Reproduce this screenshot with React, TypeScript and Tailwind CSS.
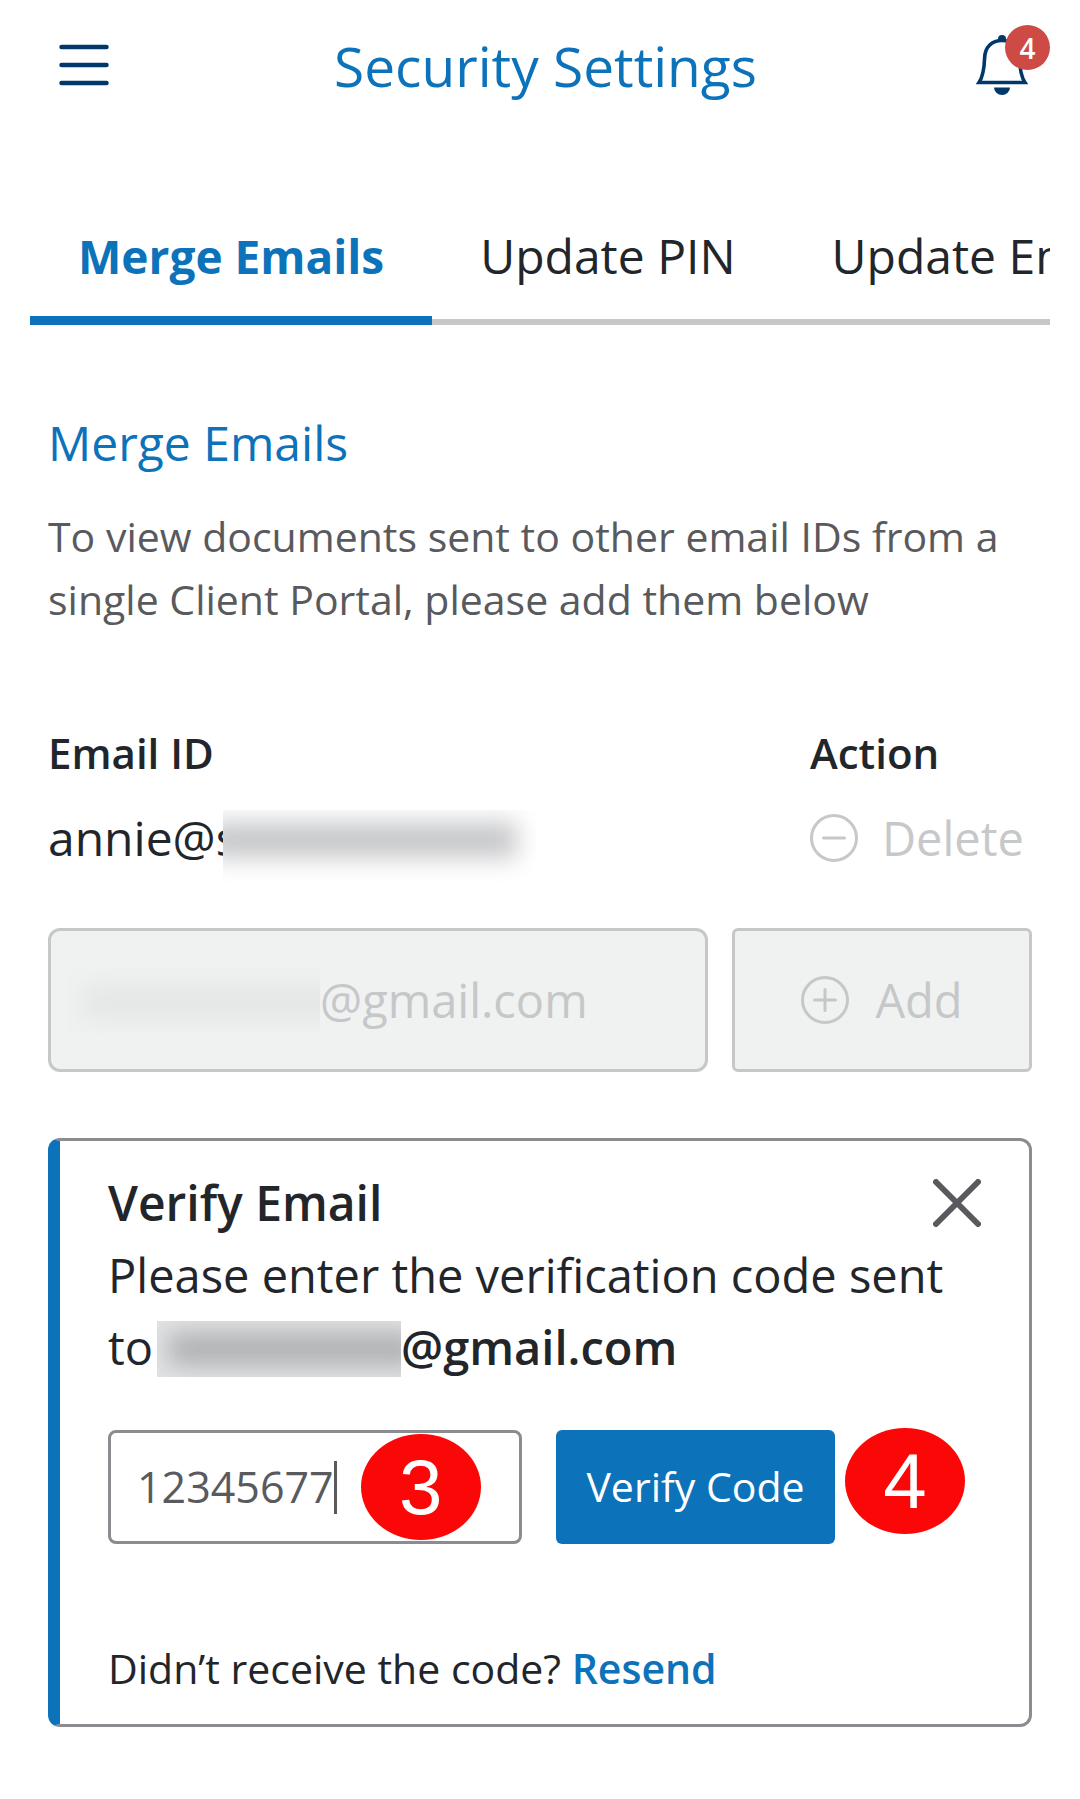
import React, { useState } from "react";
import clsx from "clsx";

const TABS = ["Merge Emails", "Update PIN", "Update Email"];

function MenuIcon() {
  return (
    <svg width="50" height="42" viewBox="0 0 50 42" fill="none" stroke="#00386b" strokeWidth="4.5" strokeLinecap="round">
      <path d="M2.5 3h45M2.5 21h45M2.5 39h45" />
    </svg>
  );
}

function BellIcon() {
  return (
    <svg width="52" height="60" viewBox="0 0 52 60" fill="none">
      <path
        d="M3 47.5C6.5 42.5 8.2 34 8.6 23C9 11.5 16 5.5 26 5.5C36 5.5 43 11.5 43.4 23C43.8 34 45.5 42.5 49 47.5Z"
        stroke="#00386b"
        strokeWidth="3.6"
      />
      <path d="M22 6.500V4a4 4 0 0 1 8 0v2.500z" fill="#00386b" />
      <path d="M18 52.500h16a8 7.500 0 0 1-16 0z" fill="#00386b" />
    </svg>
  );
}

function CircleIcon({ plus }: { plus?: boolean }) {
  return (
    <svg width="48" height="48" viewBox="0 0 48 48" fill="none" stroke="currentColor" strokeWidth="3" strokeLinecap="round">
      <circle cx="24" cy="24" r="22.5" />
      <path d="M13.500 24h21" />
      {plus && <path d="M24 13.500v21" />}
    </svg>
  );
}

function CloseIcon() {
  return (
    <svg width="48" height="48" viewBox="0 0 48 48" fill="none" stroke="#585a5e" strokeWidth="6" strokeLinecap="round">
      <path d="M3 3l42 42M45 3L3 45" />
    </svg>
  );
}

function StepMarker({ n }: { n: number }) {
  return (
    <span className="flex h-[106px] w-[120px] shrink-0 items-center justify-center rounded-[50%] bg-[#fc0707] font-['Liberation_Sans',sans-serif] text-[78px] leading-none text-white">
      {n}
    </span>
  );
}

function App() {
  const [tab, setTab] = useState(0);
  const [code, setCode] = useState("12345677");

  return (
    <div className="bg-white pb-18 font-['Open_Sans',sans-serif] text-[47px] text-[#22252a]">
      <header className="flex items-start justify-between pt-[25px] pr-[30px] pl-[59px]">
        <button aria-label="Menu" className="mt-[19px] w-14">
          <MenuIcon />
        </button>
        <h1 className="text-[55px] leading-[82px] font-medium text-[#0c72ba]">Security Settings</h1>
        <button aria-label="Notifications" className="relative flex h-[70px] w-[74px] items-end">
          <BellIcon />
          <span className="absolute top-0 right-0 flex size-[45px] items-center justify-center rounded-full bg-[#cd4a45] text-[28px] font-semibold text-white">
            4
          </span>
        </button>
      </header>

      <nav className="mx-[30px] mt-[93px] flex overflow-hidden whitespace-nowrap">
        {TABS.map((name, i) => (
          <button
            key={name}
            onClick={() => setTab(i)}
            className={clsx(
              "h-[125px] shrink-0 px-12",
              i === tab
                ? "border-b-9 border-[#0c72ba] pb-1 text-[46px] font-bold text-[#0c72ba]"
                : "border-b-6 border-[#c6c7c9] pb-[7px] text-5xl"
            )}
          >
            {name}
          </button>
        ))}
      </nav>

      <main className="px-12 pt-[82px]">
        <h2 className="text-5xl leading-[72px] font-medium text-[#0c72ba]">Merge Emails</h2>
        <p className="mt-[26px] text-[41px] leading-[63px] text-[#585a5e]">
          To view documents sent to other email IDs from a single Client Portal, please add them below
        </p>

        <table className="mt-[85px] w-full text-left">
          <thead>
            <tr className="h-[72px] text-[42px]">
              <th className="font-semibold">Email ID</th>
              <th className="w-[222px] font-semibold">Action</th>
            </tr>
          </thead>
          <tbody>
            <tr className="h-[100px]">
              <td>
                <div className="flex items-center text-5xl">
                  annie@s
                  <span className="relative mt-4 -ml-4 h-[72px] w-[313px] overflow-hidden bg-white">
                    <span className="absolute top-3 -left-4 h-9 w-[310px] bg-[#c6c7c9] blur-[12px]" />
                  </span>
                </div>
              </td>
              <td>
                <button disabled className="flex items-center gap-6 text-[#c6c8ca]">
                  <CircleIcon />
                  Delete
                </button>
              </td>
            </tr>
          </tbody>
        </table>

        <div className="mt-10 flex gap-6">
          <div className="relative flex h-36 min-w-0 flex-1 items-center rounded-xl border-3 border-[#c5c7c9] bg-[#f0f2f1] pl-[15px]">
            <span className="relative h-[66px] w-[254px] shrink-0 overflow-hidden">
              <span className="absolute top-[18px] left-4 h-[34px] w-[280px] bg-[#e4e6e5] blur-[12px]" />
            </span>
            <input
              disabled
              aria-label="Email address"
              value="@gmail.com"
              className="min-w-0 flex-1 bg-transparent text-[#c5c7c9]"
            />
          </div>
          <button
            disabled
            className="flex h-36 w-[300px] items-center justify-center gap-[26px] rounded-md border-3 border-[#c5c7c9] bg-[#f0f2f1] text-[#c5c7c9]"
          >
            <CircleIcon plus />
            Add
          </button>
        </div>

        <section className="mt-[66px] rounded-xl border-3 border-l-12 border-[#8a8c90] border-l-[#0c72ba] pt-[26px] pr-12 pb-5 pl-12">
          <div className="flex items-center justify-between">
            <h3 className="text-5xl leading-[72px] font-semibold">Verify Email</h3>
            <button aria-label="Close">
              <CloseIcon />
            </button>
          </div>
          <p className="leading-[72px]">
            Please enter the verification code sent to
            <span className="relative ml-1 inline-block h-14 w-[244px] overflow-hidden bg-[#e2e3e4] align-[-12px]">
              <span className="absolute top-3 left-3 h-8 w-[250px] bg-[#aeafb1] blur-[12px]" />
            </span>
            <span className="font-semibold">@gmail.com</span>
          </p>

          <div className="mt-[45px] flex items-center text-[41px]">
            <label className="flex h-[114px] w-[414px] items-center rounded-lg border-3 border-[#8a8c90] pl-[26px] text-[43px] text-[#585a5e]">
              <input
                aria-label="Verification code"
                value={code}
                onChange={e => setCode(e.target.value)}
                className="[field-sizing:content] outline-none"
              />
              <span className="h-[53px] w-[3px] bg-[#585a5e]" />
              <span className="ml-6">
                <StepMarker n={3} />
              </span>
            </label>
            <button className="ml-[34px] h-[114px] w-[279px] rounded-md bg-[#0c72ba] text-white">Verify Code</button>
            <span className="mb-3 ml-[10px]">
              <StepMarker n={4} />
            </span>
          </div>

          <p className="mt-[86px] text-[41px] leading-[72px]">
            Didn’t receive the code?{" "}
            <a href="#resend" className="font-semibold text-[#0c72ba]">
              Resend
            </a>
          </p>
        </section>
      </main>
    </div>
  );
}

export default App;
